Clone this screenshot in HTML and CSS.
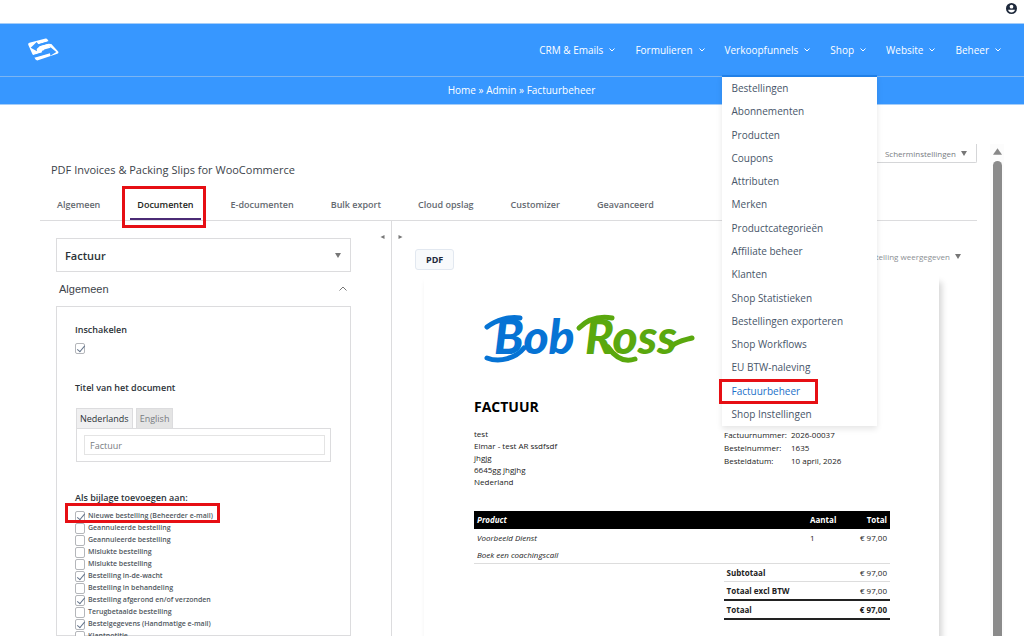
FILE: index.html
```html
<!DOCTYPE html>
<html lang="nl">
  <head>
    <meta charset="UTF-8" />
    <meta name="viewport" content="width=device-width, initial-scale=1.0" />
    <title>Factuurbeheer</title>
    <link rel="stylesheet" href="styles.css" />
  </head>
  <body>
    <div class="topbar">
      <a href="#" aria-label="Account">
        <svg class="account" viewBox="0 0 24 24">
          <circle cx="12" cy="12" r="12" fill="#1e293b" />
          <circle cx="12" cy="8" r="4" fill="#fff" />
          <path d="M4.500 14.500h15c-1 4-4 6-7.500 6s-6.500-2-7.500-6z" fill="#fff" />
        </svg>
      </a>
    </div>

    <header class="header">
      <a href="#" class="brand" aria-label="Home">
        <svg viewBox="0 0 96 72">
          <path d="M4 21Q1 16 7 14L53 2Q59 0 62 5L65 10L30 20L28 26L58 18L73 18L94 41Q96 45 91 47L33 67Q28 68 25 64L22 58L55 48L60 40L20 51Q17 51 16 48z" fill="#fff" />
          <path d="M65 10L34 19L29 12L11 29L30 40L29 33L40 30L38 25L62 18L72 18z" fill="#3797ff" />
          <path d="M20 51L46 43L43 37L71 29L66 24L88 42L70 53L69 46L22 59z" fill="#3797ff" />
          <path d="M38 25L65 17L72 18L50 31L52 36L20 48L18 44L34 38L30 32z" fill="#fff" />
        </svg>
      </a>
      <nav>
        <ul class="nav">
          <li><a href="#">CRM &amp; Emails <svg class="chev" viewBox="0 0 6 4"><path d="M.5.5L3 3L5.500.5" /></svg></a></li>
          <li><a href="#">Formulieren <svg class="chev" viewBox="0 0 6 4"><path d="M.5.5L3 3L5.500.5" /></svg></a></li>
          <li>
            <a href="#">Verkoopfunnels <svg class="chev" viewBox="0 0 6 4"><path d="M.5.5L3 3L5.500.5" /></svg></a>
            <ul class="submenu">
              <li><a href="#">Bestellingen</a></li>
              <li><a href="#">Abonnementen</a></li>
              <li><a href="#">Producten</a></li>
              <li><a href="#">Coupons</a></li>
              <li><a href="#">Attributen</a></li>
              <li><a href="#">Merken</a></li>
              <li><a href="#">Productcategorieën</a></li>
              <li><a href="#">Affiliate beheer</a></li>
              <li><a href="#">Klanten</a></li>
              <li><a href="#">Shop Statistieken</a></li>
              <li><a href="#">Bestellingen exporteren</a></li>
              <li><a href="#">Shop Workflows</a></li>
              <li><a href="#">EU BTW-naleving</a></li>
              <li class="marked marked-menu"><a href="#" class="current">Factuurbeheer</a></li>
              <li><a href="#">Shop Instellingen</a></li>
            </ul>
          </li>
          <li><a href="#">Shop <svg class="chev" viewBox="0 0 6 4"><path d="M.5.5L3 3L5.500.5" /></svg></a></li>
          <li><a href="#">Website <svg class="chev" viewBox="0 0 6 4"><path d="M.5.5L3 3L5.500.5" /></svg></a></li>
          <li><a href="#">Beheer <svg class="chev" viewBox="0 0 6 4"><path d="M.5.5L3 3L5.500.5" /></svg></a></li>
        </ul>
      </nav>
    </header>

    <div class="breadcrumb">
      <span><a href="#">Home</a> » <a href="#">Admin</a> » Factuurbeheer</span>
    </div>

    <div class="workspace">
      <main class="main">
        <div class="screen-row">
          <button class="screen-options">Scherminstellingen <svg class="tri" viewBox="0 0 6 5"><path d="M0 0h6L3 5z" /></svg></button>
        </div>
        <h1>PDF Invoices &amp; Packing Slips for WooCommerce</h1>
        <nav class="tabs">
          <a href="#">Algemeen</a>
          <a href="#" class="active marked marked-tab">Documenten</a>
          <a href="#">E-documenten</a>
          <a href="#">Bulk export</a>
          <a href="#">Cloud opslag</a>
          <a href="#">Customizer</a>
          <a href="#">Geavanceerd</a>
        </nav>

        <div class="panes">
          <section class="settings">
            <button class="slide" aria-label="Voorbeeld vergroten"><svg viewBox="0 0 4 4"><path d="M4 0v4L0 2z" /></svg></button>
            <div class="doc-select">
              <select aria-label="Document">
                <option>Factuur</option>
              </select>
              <svg class="tri" viewBox="0 0 6 5"><path d="M0 0h6L3 5z" /></svg>
            </div>
            <button class="section-toggle">
              Algemeen
              <svg viewBox="0 0 8 5"><path d="M.5 4.500L4 1L7.500 4.500" /></svg>
            </button>
            <div class="card">
              <label class="title" for="enabled">Inschakelen</label>
              <input type="checkbox" id="enabled" checked />
              <label class="title title-doc" for="docTitle">Titel van het document</label>
              <div class="lang-tabs">
                <button class="on">Nederlands</button>
                <button>English</button>
              </div>
              <div class="lang-body">
                <input type="text" id="docTitle" placeholder="Factuur" />
              </div>
              <div class="title title-mail">Als bijlage toevoegen aan:</div>
              <div class="checks">
                <label class="marked marked-check"><input type="checkbox" checked />Nieuwe bestelling (Beheerder e-mail)</label>
                <label><input type="checkbox" />Geannuleerde bestelling</label>
                <label><input type="checkbox" />Geannuleerde bestelling</label>
                <label><input type="checkbox" />Mislukte bestelling</label>
                <label><input type="checkbox" />Mislukte bestelling</label>
                <label><input type="checkbox" checked />Bestelling in-de-wacht</label>
                <label><input type="checkbox" />Bestelling in behandeling</label>
                <label><input type="checkbox" checked />Bestelling afgerond en/of verzonden</label>
                <label><input type="checkbox" />Terugbetaalde bestelling</label>
                <label><input type="checkbox" checked />Bestelgegevens (Handmatige e-mail)</label>
                <label><input type="checkbox" />Klantnotitie</label>
              </div>
            </div>
          </section>

          <section class="preview">
            <button class="slide" aria-label="Instellingen vergroten"><svg viewBox="0 0 4 4"><path d="M0 0v4L4 2z" /></svg></button>
            <div class="preview-bar">
              <button class="pdf">PDF</button>
              <button class="order">bestelling weergegeven <svg class="tri" viewBox="0 0 6 5"><path d="M0 0h6L3 5z" /></svg></button>
            </div>
            <article class="paper">
              <svg class="logo" viewBox="0 0 216 64">
                <g class="bob">
                  <text x="12" y="49">Bob</text>
                  <path d="M5 22C14 15 28 11 38 13" />
                  <path d="M5 53C18 58 34 53 42 43" />
                </g>
                <g class="ross">
                  <text x="103" y="49">Ross</text>
                  <path d="M97 23C106 14 118 11 130 13" />
                  <path d="M126 42C133 52 142 58 153 54" />
                  <path d="M190 41C195 36 203 35 210 33" />
                </g>
              </svg>
              <h2>FACTUUR</h2>
              <div class="parties">
                <address>
                  test<br />
                  Elmar - test AR ssdfsdf<br />
                  jhgjg<br />
                  6645gg jhgjhg<br />
                  Nederland
                </address>
                <table class="meta">
                  <tr><th>Factuurnummer:</th><td>2026-00037</td></tr>
                  <tr><th>Bestelnummer:</th><td>1635</td></tr>
                  <tr><th>Besteldatum:</th><td>10 april, 2026</td></tr>
                </table>
              </div>
              <table class="lines">
                <thead>
                  <tr><th class="product">Product</th><th class="qty">Aantal</th><th class="price">Total</th></tr>
                </thead>
                <tbody>
                  <tr><td class="product">Voorbeeld Dienst</td><td>1</td><td class="price">€ 97,00</td></tr>
                  <tr><td class="product" colspan="3">Boek een coachingscall</td></tr>
                </tbody>
              </table>
              <table class="totals">
                <tr><th>Subtotaal</th><td>€ 97,00</td></tr>
                <tr><th>Totaal excl BTW</th><td>€ 97,00</td></tr>
                <tr class="grand"><th>Totaal</th><td>€ 97,00</td></tr>
              </table>
            </article>
          </section>
        </div>
      </main>
      <div class="scrollbar">
        <svg viewBox="0 0 10 7"><path d="M5 0L10 7H0z" /></svg>
        <div class="thumb"></div>
      </div>
    </div>
  </body>
</html>
```
FILE: styles.css
```css
* {
  box-sizing: border-box;
}

body {
  margin: 0;
  height: 100vh;
  overflow: hidden;
  display: flex;
  flex-direction: column;
  font-family: "Open Sans", "Noto Sans", sans-serif;
  font-size: 10px;
  color: #3c434a;
  background-color: #fff;
}

a {
  color: inherit;
  text-decoration: none;
}

ul {
  list-style: none;
  margin: 0;
  padding: 0;
}

button {
  font: inherit;
  color: inherit;
  background: none;
  border: none;
  padding: 0;
}

svg {
  display: block;
}

.topbar {
  height: 23px;
  flex: none;
  display: flex;
  justify-content: flex-end;
  padding: 3px 7px;
}

.account {
  width: 11px;
  height: 11px;
}

.header {
  height: 54px;
  flex: none;
  display: flex;
  align-items: center;
  justify-content: space-between;
  padding: 0 23px 0 27px;
  background-color: #3797ff;
  color: #fff;
  border-top: 1px solid #a5cdf8;
  border-bottom: 1px solid #7bb5f3;
}

.brand svg {
  width: 32px;
  height: 24px;
}

.nav {
  display: flex;
  gap: 20px;
}

.nav > li {
  position: relative;
}

.nav > li > a {
  display: flex;
  align-items: center;
  gap: 6px;
  line-height: 52px;
}

.chev {
  width: 6px;
  height: 4px;
  fill: none;
  stroke: #fff;
}

.submenu {
  position: absolute;
  z-index: 5;
  top: 51px;
  left: -3px;
  width: 155px;
  height: 351px;
  display: flex;
  flex-direction: column;
  justify-content: space-between;
  background-color: #fff;
  border-top: 2px solid #2080e8;
  box-shadow: 0 3px 6px rgba(0, 0, 0, 0.1);
  color: #475569;
}

.submenu a {
  display: block;
  padding: 0 10px;
  line-height: 23px;
}

.submenu .current {
  color: #1b6fc9;
}

.breadcrumb {
  flex: none;
  text-align: center;
  line-height: 27px;
  padding-left: 19px;
  background-color: #3797ff;
  border-bottom: 1px solid #a5cdf8;
  color: #fff;
}

/* red annotation frames */
.marked {
  position: relative;
}

.marked::after {
  content: "";
  position: absolute;
  border: 3px solid #e60f14;
}

.marked-menu::after {
  inset: -1px 59px -1px -3px;
}

.marked-tab::after {
  inset: -6px -5px -10px -8px;
}

.marked-check::after {
  inset: -7px -7px -1px -10px;
}

.workspace {
  flex: 1;
  min-height: 0;
  display: flex;
  padding: 39px 20px 0 40px;
}

.main {
  flex: 1;
  min-width: 0;
  display: flex;
  flex-direction: column;
}

.screen-row {
  flex: none;
  display: flex;
  justify-content: flex-end;
}

.screen-options {
  display: flex;
  align-items: center;
  gap: 5px;
  height: 19px;
  padding: 0 9px 0 16px;
  border: 1px solid #d5d6d8;
  border-top: none;
  border-radius: 0 0 2px 2px;
  font-size: 8px;
  color: #787c82;
}

.tri {
  width: 6px;
  height: 5px;
  fill: #777;
}

h1 {
  margin: 0 0 0 11px;
  font-size: 11px;
  font-weight: 400;
  line-height: 13px;
  flex: none;
}

.tabs {
  flex: none;
  display: flex;
  gap: 23px;
  margin-top: 16px;
  padding-left: 10px;
  border-bottom: 1px solid #dcdcde;
  font-size: 9px;
  font-weight: 600;
  color: #646970;
}

.tabs a {
  padding: 0 7px;
  line-height: 26px;
  border-bottom: 2px solid transparent;
}

.tabs .active {
  color: #1d1f22;
  border-bottom-color: #4b2b75;
}

.panes {
  flex: 1;
  min-height: 0;
  display: flex;
}

.settings {
  width: 352px;
  flex: none;
  padding: 17px 40px 0 16px;
  border-right: 1px solid #dcdcde;
  display: flex;
  flex-direction: column;
  position: relative;
}

.slide {
  position: absolute;
  top: 14px;
}

.slide svg {
  width: 5px;
  height: 4px;
  fill: #777;
}

.settings .slide {
  right: 6px;
}

.preview .slide {
  left: 6px;
}

.doc-select {
  display: flex;
  align-items: center;
  height: 34px;
  flex: none;
  padding-right: 9px;
  border: 1px solid #dcdcde;
}

.doc-select select {
  flex: 1;
  height: 32px;
  padding: 0 8px;
  appearance: none;
  border: none;
  background: none;
  font: 600 11px "Open Sans", sans-serif;
  color: #2c3338;
}

.section-toggle {
  display: flex;
  align-items: center;
  justify-content: space-between;
  height: 34px;
  flex: none;
  padding: 0 4px 1px 3px;
  font: 11px "Liberation Sans", Arial, sans-serif;
}

.section-toggle svg {
  width: 8px;
  height: 5px;
  fill: none;
  stroke: #777;
}

.card {
  flex: 1;
  min-height: 0;
  padding: 17px 19px 0 18px;
  border: 1px solid #dcdcde;
}

.title {
  display: block;
  font-size: 9px;
  font-weight: 600;
  line-height: 12px;
  color: #2c3338;
}

.title-doc {
  margin-top: 28px;
}

.title-mail {
  margin-top: 30px;
}

input[type="checkbox"] {
  appearance: none;
  display: flex;
  flex: none;
  width: 10px;
  height: 11px;
  margin: 0;
  border: 1px solid #b4b6ba;
  border-radius: 2px;
  background-color: #fff;
}

input[type="checkbox"]:checked::before {
  content: "";
  width: 3px;
  height: 7px;
  margin-left: 3px;
  border: solid #64748b;
  border-width: 0 1px 1px 0;
  transform: rotate(40deg);
}

#enabled {
  margin-top: 7px;
}

.lang-tabs {
  display: flex;
  gap: 3px;
  margin: 14px 0 0 1px;
}

.lang-tabs button {
  height: 20px;
  padding: 0 3px;
  font-size: 9px;
  border: 1px solid #dcdcde;
  border-bottom: none;
  background-color: #e4e4e4;
  color: #787c82;
}

.lang-tabs .on {
  background-color: #f0f0f1;
  color: #2c3338;
}

.lang-body {
  margin-left: 1px;
  padding: 6px 5px 6px 7px;
  border: 1px solid #dcdcde;
}

.lang-body input {
  display: block;
  width: 100%;
  height: 20px;
  padding: 0 5px;
  border: 1px solid #e4e4e4;
  font: 9px "Open Sans", sans-serif;
}

.lang-body input::placeholder {
  color: #787c82;
}

.checks {
  display: flex;
  flex-direction: column;
  align-items: flex-start;
  margin-top: 6px;
}

.checks label {
  display: flex;
  align-items: center;
  gap: 3px;
  height: 12px;
  font-size: 7px;
  font-weight: 600;
  line-height: 12px;
  color: #50575e;
}

.preview {
  flex: 1;
  min-width: 0;
  padding: 28px 14px 0 23px;
  display: flex;
  flex-direction: column;
  position: relative;
}

.preview-bar {
  display: flex;
  align-items: flex-start;
  justify-content: space-between;
  flex: none;
}

.pdf {
  height: 21px;
  padding: 0 10px;
  font-size: 9px;
  font-weight: 700;
  color: #1e293b;
  background-color: #f8fafc;
  border: 1px solid #e2e8f0;
  border-radius: 3px;
}

.order {
  display: flex;
  align-items: center;
  gap: 5px;
  height: 14px;
  padding-right: 2px;
  font-size: 8px;
  color: #8c8f94;
}

.paper {
  flex: 1;
  min-height: 0;
  margin: 6px 24px 0 9px;
  padding: 29px 49px 0 50px;
  box-shadow: 3px 6px 6px rgba(0, 0, 0, 0.16);
  font-size: 8px;
  color: #222;
}

.logo {
  width: 216px;
  height: 64px;
  margin-left: 8px;
}

.logo text {
  font: italic 900 48px Lato, sans-serif;
}

.logo path {
  fill: none;
  stroke-width: 5;
  stroke-linecap: round;
}

.bob {
  fill: #0673d4;
  stroke: #0673d4;
}

.ross {
  fill: #5aa80e;
  stroke: #5aa80e;
}

.logo text {
  stroke: none;
}

h2 {
  margin: 28px 0 0;
  font-size: 14px;
  line-height: 20px;
  color: #000;
}

.parties {
  display: flex;
  align-items: flex-start;
  justify-content: space-between;
  margin-top: 11px;
}

address {
  font-style: normal;
  line-height: 12px;
}

table {
  border-collapse: collapse;
}

th,
td {
  padding: 0;
  text-align: left;
}

.meta {
  width: 166px;
}

.meta th {
  width: 67px;
  font-weight: 400;
}

.meta td,
.meta th {
  line-height: 13px;
}

.lines {
  width: 100%;
  margin-top: 23px;
  border-bottom: 1px solid #ddd;
}

.lines th,
.lines td,
.totals th,
.totals td {
  padding: 0 3px;
  line-height: 17px;
}

.lines thead {
  background-color: #000;
  color: #fff;
}

.lines .product {
  font-style: italic;
}

.lines th {
  line-height: 18px;
}

.lines .qty {
  width: 41px;
}

.lines .price {
  width: 42px;
  text-align: right;
}

.totals {
  width: 40%;
  margin-left: auto;
}

.totals tr {
  border-bottom: 1px solid #ddd;
}

.totals td {
  text-align: right;
}

.totals .grand {
  border-top: 2px solid #222;
  border-bottom: 2px solid #222;
}

.grand td {
  font-weight: 700;
}

.scrollbar {
  flex: none;
  width: 14px;
  margin-left: 13px;
  padding: 4px 2px 0 3px;
  background-color: #fcfcfc;
  display: flex;
  flex-direction: column;
  gap: 6px;
}

.scrollbar svg {
  width: 9px;
  height: 7px;
  flex: none;
  fill: #888;
}

.thumb {
  flex: 1;
  background-color: #8b8b8b;
  border-radius: 5px 5px 0 0;
}
```
